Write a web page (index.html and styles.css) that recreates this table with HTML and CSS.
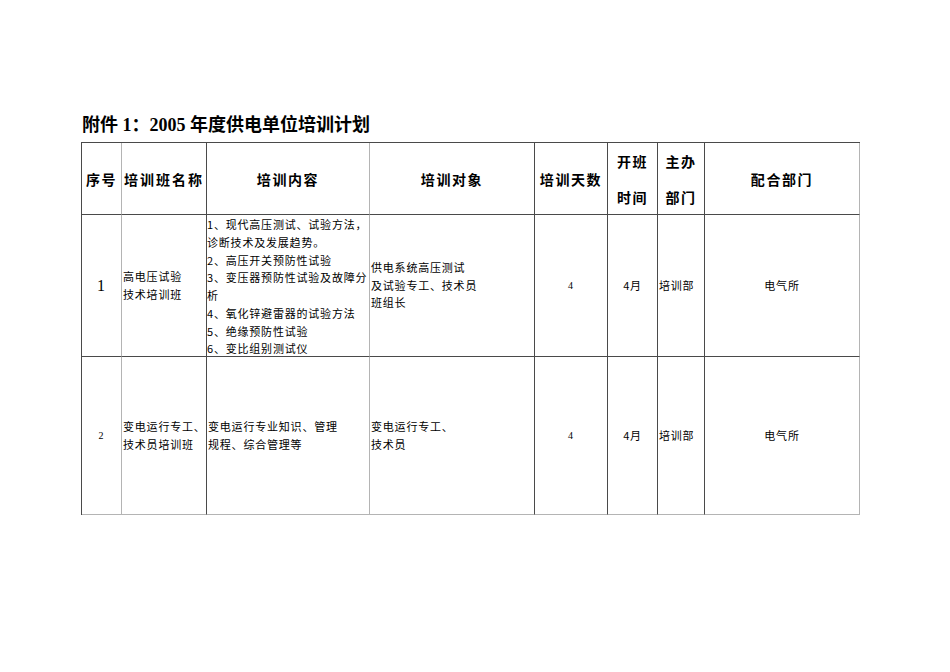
FILE: index.html
```html
<!DOCTYPE html>
<html lang="zh-CN">
<head>
<meta charset="utf-8">
<title>附件1：2005年度供电单位培训计划</title>
<link rel="stylesheet" href="styles.css">
</head>
<body>
<div class="page">
  <h1 class="title">附件 1：2005 年度供电单位培训计划</h1>
  <div class="grid">
    <div class="cell head c1">序号</div>
    <div class="cell head c2">培训班名称</div>
    <div class="cell head c3">培训内容</div>
    <div class="cell head c4">培训对象</div>
    <div class="cell head c5">培训天数</div>
    <div class="cell head c6 two">开班<br>时间</div>
    <div class="cell head c7 two">主办<br>部门</div>
    <div class="cell head c8">配合部门</div>

    <div class="cell c1 center num-big">1</div>
    <div class="cell c2 left">高电压试验<br>技术培训班</div>
    <div class="cell c3 top">1、现代高压测试、试验方法，<br>诊断技术及发展趋势。<br>2、高压开关预防性试验<br>3、变压器预防性试验及故障分<br>析<br>4、氧化锌避雷器的试验方法<br>5、绝缘预防性试验<br>6、变比组别测试仪</div>
    <div class="cell c4 left">供电系统高压测试<br>及试验专工、技术员<br>班组长</div>
    <div class="cell c5 center num">4</div>
    <div class="cell c6 center">4月</div>
    <div class="cell c7 left">培训部</div>
    <div class="cell c8 center">电气所</div>

    <div class="cell c1 center num last">2</div>
    <div class="cell c2 left last">变电运行专工、<br>技术员培训班</div>
    <div class="cell c3 left last">变电运行专业知识、管理<br>规程、综合管理等</div>
    <div class="cell c4 left last">变电运行专工、<br>技术员</div>
    <div class="cell c5 center num last">4</div>
    <div class="cell c6 center last">4月</div>
    <div class="cell c7 left last">培训部</div>
    <div class="cell c8 center last">电气所</div>
  </div>
</div>
</body>
</html>
```
FILE: styles.css
```css
html, body {
  margin: 0;
  padding: 0;
  background: #ffffff;
}

body {
  font-family: "Liberation Serif", "Noto Sans CJK SC", serif;
  color: #000;
}

.page {
  padding: 113px 0 0 81px;
}

.title {
  margin: 0 0 5px 1px;
  font-size: 18px;
  line-height: 24px;
  font-weight: bold;
  font-family: "Liberation Serif", "Noto Sans CJK SC", serif;
  white-space: nowrap;
}

.grid {
  display: grid;
  grid-template-columns: 40px 85px 163px 165px 73px 50px 47px 155px;
  grid-template-rows: 72px 142px 158px;
  width: 778px;
  border-left: 1px solid #4a4a4a;
  border-top: 1px solid #4a4a4a;
}

.cell {
  box-sizing: border-box;
  border-right: 1px solid #4a4a4a;
  border-bottom: 1px solid #4a4a4a;
  font-family: "Noto Sans CJK SC", sans-serif;
  font-size: 11px;
  letter-spacing: 0.8px;
  line-height: 17.75px;
  white-space: nowrap;
  display: flex;
  flex-direction: column;
  justify-content: center;
}

.c1, .c3, .c8 {
  border-right-color: #b4b4b4;
}

.last {
  border-bottom-color: #b4b4b4;
}

.head {
  font-size: 14px;
  font-weight: bold;
  letter-spacing: 1.6px;
  align-items: center;
  text-align: center;
  line-height: 36px;
}

.head.c2 {
  letter-spacing: 2px;
}

.center {
  align-items: center;
  text-align: center;
}

.left {
  align-items: flex-start;
  padding-left: 1px;
}

.top {
  justify-content: flex-start;
  padding-left: 0;
  padding-top: 1px;
}

.num-big {
  font-family: "Liberation Serif", serif;
  font-size: 16px;
}

.num {
  font-family: "Liberation Serif", serif;
  font-size: 10px;
}
```
